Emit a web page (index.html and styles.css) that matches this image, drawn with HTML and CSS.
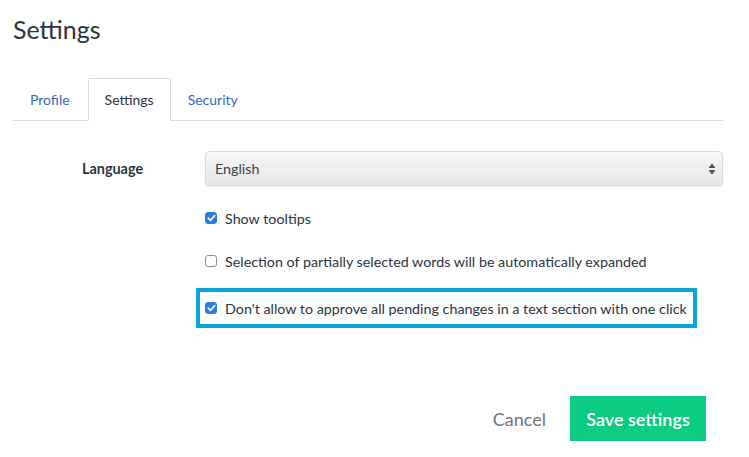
FILE: index.html
```html
<!DOCTYPE html>
<html>
<head>
<meta charset="utf-8">
<link rel="stylesheet" href="styles.css">
</head>
<body>
<div class="page">
  <h1 class="title">Settings</h1>
  <div class="tabs">
    <a class="tab">Profile</a>
    <a class="tab active">Settings</a>
    <a class="tab">Security</a>
  </div>
  <form class="form">
    <div class="row">
      <label class="label">Language</label>
      <div class="select">
        <span>English</span>
        <svg class="arrows" width="8" height="12" viewBox="0 0 8 12"><path d="M4 0.5 L7.5 5 H0.5 Z M4 11.5 L7.5 7 H0.5 Z" fill="#4a5260"/></svg>
      </div>
    </div>
    <div class="checks">
      <label class="check"><span class="box on"><svg width="9" height="8" viewBox="0 0 9 8"><path d="M1.3 4.2 L3.5 6.3 L7.7 1.6" fill="none" stroke="#fff" stroke-width="1.7" stroke-linecap="round" stroke-linejoin="round"/></svg></span>Show tooltips</label>
      <label class="check"><span class="box"></span>Selection of partially selected words will be automatically expanded</label>
      <label class="check highlight"><span class="box on"><svg width="9" height="8" viewBox="0 0 9 8"><path d="M1.3 4.2 L3.5 6.3 L7.7 1.6" fill="none" stroke="#fff" stroke-width="1.7" stroke-linecap="round" stroke-linejoin="round"/></svg></span>Don't allow to approve all pending changes in a text section with one click</label>
    </div>
    <div class="actions">
      <a class="cancel">Cancel</a>
      <button type="button" class="save">Save settings</button>
    </div>
  </form>
</div>
</body>
</html>
```
FILE: styles.css
```css
* { box-sizing: border-box; }
html, body { margin: 0; background: #fff; }
body {
  font-family: Lato, "Open Sans", sans-serif;
  color: #2b3440;
}
.page {
  padding: 13px 26px 0 13px;
}
.title {
  margin: 0;
  font-size: 25px;
  font-weight: 400;
  line-height: 32px;
  color: #2b3440;
}
.tabs {
  margin-top: 33px;
  display: flex;
  border-bottom: 1px solid #dcdcdc;
  height: 43px;
}
.tab {
  display: block;
  padding: 0 16px;
  font-size: 14px;
  line-height: 42px;
  color: #3866c8;
  border: 1px solid transparent;
  border-bottom: none;
  margin-bottom: -1px;
}
.tab:first-child { padding-right: 17px; }
.tab.active {
  color: #2b3440;
  border-color: #dcdcdc;
  background: #fff;
  height: 43px;
}
.form {
  display: flex;
  flex-direction: column;
}
.row {
  display: flex;
  align-items: center;
  margin-top: 30px;
}
.label {
  width: 192px;
  padding-left: 69px;
  font-weight: 700;
  font-size: 14.4px;
}
.select {
  flex: 1;
  height: 35px;
  border: 1px solid #d9d9d9;
  border-radius: 4px;
  background: linear-gradient(#f7f7f7, #e6e6e6);
  box-shadow: 0 1px 1px rgba(0,0,0,0.08);
  display: flex;
  align-items: center;
  justify-content: space-between;
  padding: 0 6px 0 9px;
  font-size: 14.3px;
  color: #3a4250;
}
.checks {
  display: flex;
  flex-direction: column;
  padding-left: 183px;
  margin-top: 20px;
}
.check {
  display: flex;
  align-items: center;
  font-size: 14.3px;
  height: 24px;
  padding-left: 9px;
  margin-left: 0;
}
.check + .check { margin-top: 19px; }
.box {
  width: 12px;
  height: 12px;
  border: 1px solid #8a8f96;
  border-radius: 3px;
  margin-right: 8px;
  display: flex;
  align-items: center;
  justify-content: center;
  background: #fff;
}
.box.on {
  background: #2a7de6;
  border-color: #2a7de6;
}
.highlight {
  align-self: flex-start;
  border: 4px solid #0aa3dc;
  height: 40px;
  padding: 0 6px 0 5px;
  margin-left: 0;
}
.check.highlight { margin-top: 15px; }
.actions {
  display: flex;
  justify-content: flex-end;
  align-items: center;
  margin-top: 68px;
  padding-right: 17px;
}
.cancel {
  font-size: 18px;
  color: #6b7585;
  margin-right: 24px;
}
.save {
  border: none;
  background: #0ccb82;
  color: #fff;
  font-family: inherit;
  font-size: 18px;
  font-weight: 600;
  width: 136px;
  height: 45px;
  padding: 0;
}
```
